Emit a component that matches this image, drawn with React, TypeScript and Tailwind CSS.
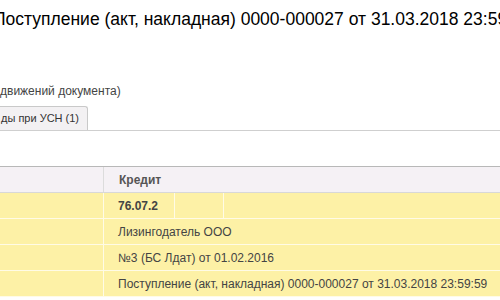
const rows = [
  { text: 'Лизингодатель ООО' },
  { text: '№3 (БС Лдат) от 01.02.2016' },
  { text: 'Поступление (акт, накладная) 0000-000027 от 31.03.2018 23:59:59' },
]

export default function App() {
  return (
    <div className="h-[300px] w-[500px] overflow-hidden bg-white font-['Liberation_Sans',Arial,sans-serif]">
      {/* document title */}
      <div className="ml-[-7px] whitespace-nowrap pt-[9px] text-[17.5px] leading-5 text-black">
        Поступление (акт, накладная) 0000-000027 от 31.03.2018 23:59:59
      </div>

      <div className="mt-[54px] whitespace-nowrap text-[12px] leading-4 text-[#444]">движений документа)</div>

      {/* tabs */}
      <div className="mt-[7px] flex border-b border-[#cfcfcf]">
        <div className="flex h-[24px] w-[88px] items-center rounded-tr-[3px] border-r border-t border-[#c9c9c9] bg-[#f3f1f3] pl-px text-[11px] text-[#333]">
          ды при УСН (1)
        </div>
      </div>

      {/* table */}
      <div className="mt-[35px] border-t border-[#b8b8b8]">
        <div className="flex h-[26px] border-b border-[#d8d8d8] bg-[#f5f1f5]">
          <div className="w-[104px] border-r border-[#dcdcdc]" />
          <div className="flex flex-1 items-center pl-[15px] text-[12px] font-bold text-[#555]">Кредит</div>
        </div>
        <div className="bg-[#fdf1a6] text-[12px] text-[#444]">
          <div className="flex h-[26px] border-b border-[#fffbe6]">
            <div className="w-[104px] border-r border-[#fffbe6]" />
            <div className="flex w-[71px] items-center border-r border-[#fffbe6] pl-[14px] font-bold">76.07.2</div>
            <div className="w-[49px] border-r border-[#fffbe6]" />
            <div className="flex-1" />
          </div>
          {rows.map((r) => (
            <div key={r.text} className="flex h-[26px] border-b border-[#fffbe6]">
              <div className="w-[104px] border-r border-[#fffbe6]" />
              <div className="flex flex-1 items-center whitespace-nowrap pl-[14px]">{r.text}</div>
            </div>
          ))}
        </div>
      </div>
    </div>
  )
}
